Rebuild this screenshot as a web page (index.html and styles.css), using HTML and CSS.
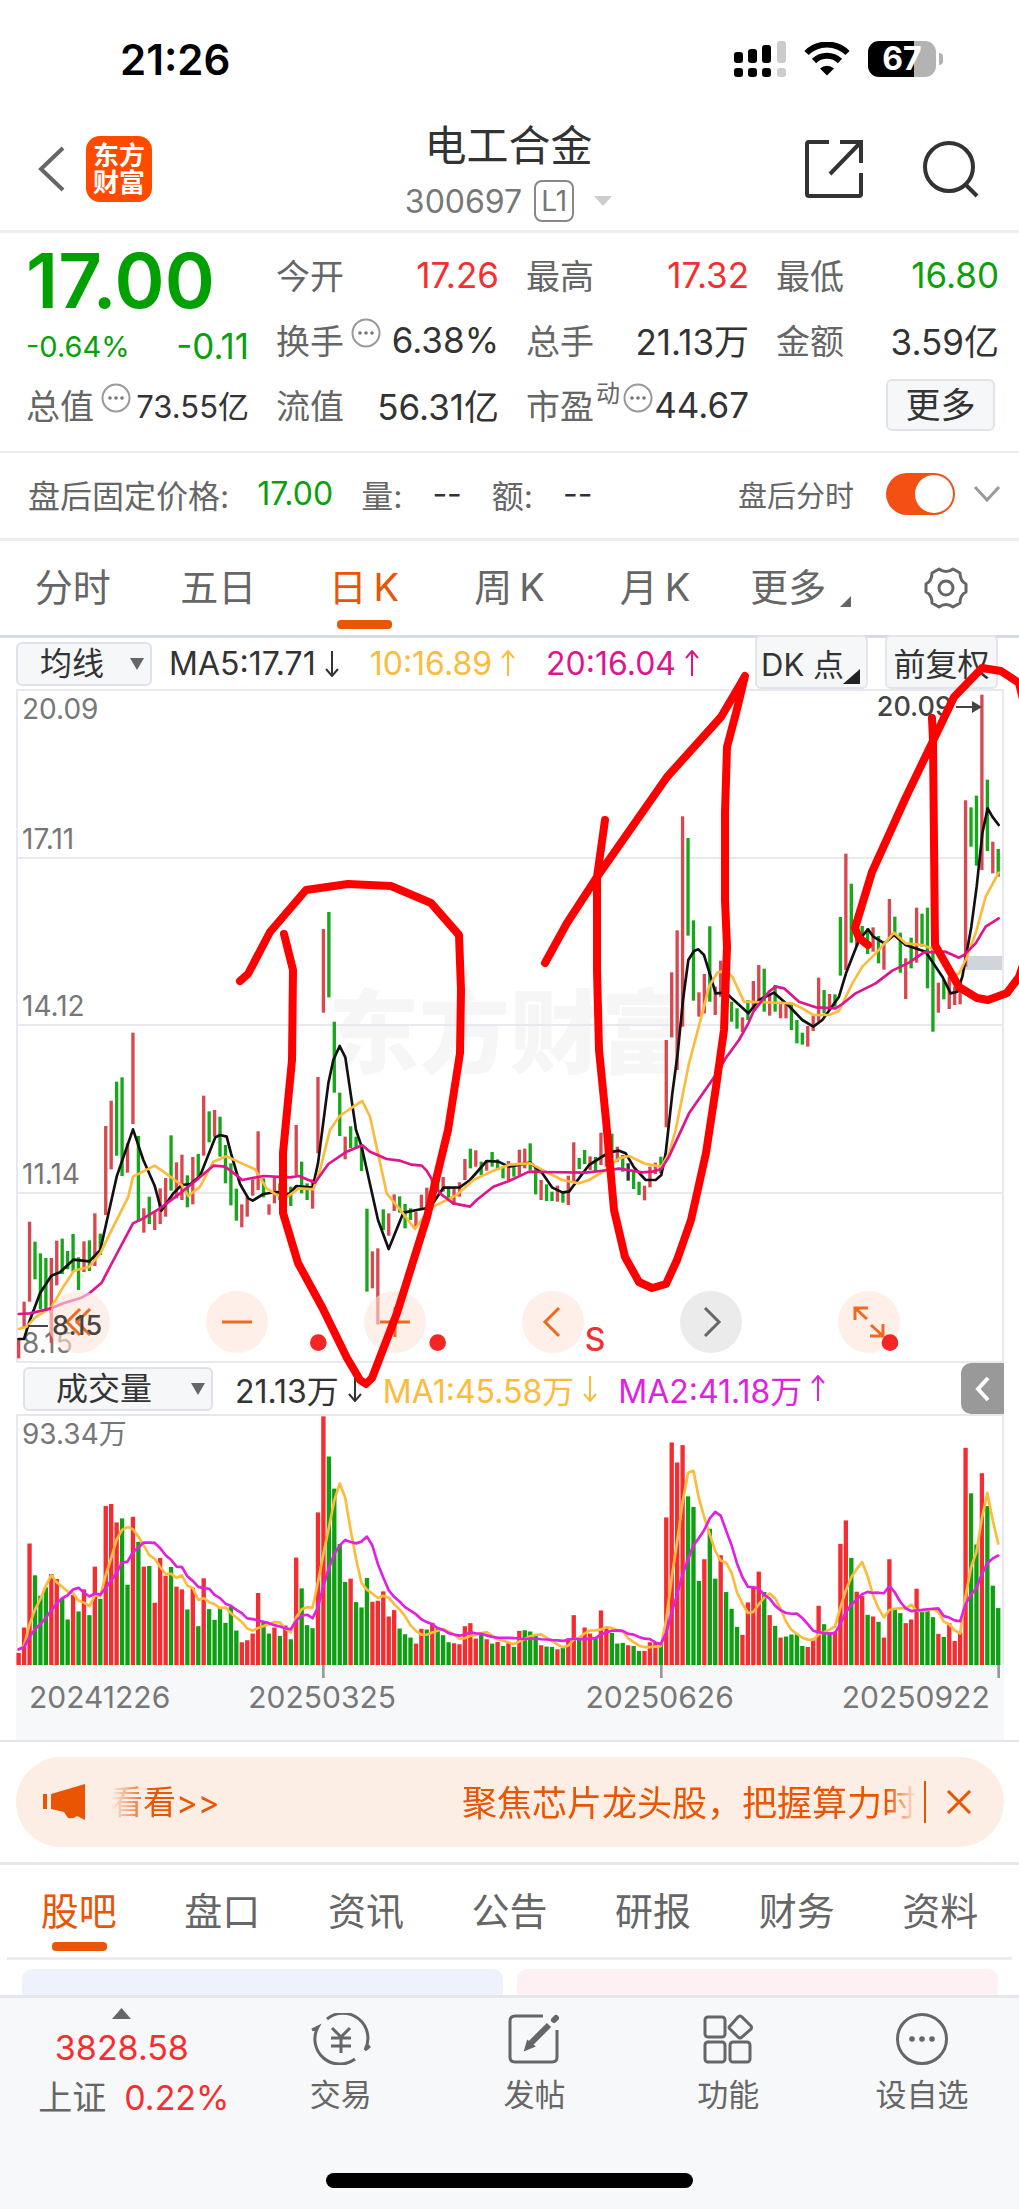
FILE: index.html
```html
<!DOCTYPE html>
<html lang="zh-CN">
<head>
<meta charset="utf-8">
<meta name="viewport" content="width=device-width, initial-scale=1">
<title>电工合金 300697</title>
<link rel="stylesheet" href="styles.css">
</head>
<body>
<div class="status">
  <span class="clock">21:26</span>
  <span class="status-icons">
    <svg width="52" height="36" viewBox="0 0 52 36"><g fill="#000"><rect x="0" y="11" width="9" height="11" rx="3"/><rect x="14" y="8" width="9" height="14" rx="3"/><rect x="28" y="4" width="9" height="18" rx="3"/><rect x="0" y="27" width="9" height="9" rx="3"/><rect x="14" y="27" width="9" height="9" rx="3"/><rect x="28" y="27" width="9" height="9" rx="3"/></g><g fill="#ccc"><rect x="43" y="0" width="9" height="22" rx="3"/><rect x="43" y="27" width="9" height="9" rx="3"/></g></svg>
    <svg width="46" height="34" viewBox="0 0 46 34"><path d="M2.500 11A29 29 0 0 1 43.500 11M10 19A18.500 18.500 0 0 1 36 19" fill="none" stroke="#000" stroke-width="6"/><path d="M16 26.500A10 10 0 0 1 30 26.500L23 33.500Z"/></svg>
    <span class="battery"><span class="cell">67</span><span class="cap"></span></span>
  </span>
</div>

<header class="topbar">
  <div class="top-left">
    <button class="icon-btn" aria-label="返回"><svg width="28" height="46" viewBox="0 0 28 46"><path d="M25 2L3 23L25 44" fill="none" stroke="#666" stroke-width="4"/></svg></button>
    <a class="logo" href="#">东方<br>财富</a>
  </div>
  <div class="title">
    <h1>电工合金</h1>
    <div class="code">300697<span class="level">L1</span><svg width="18" height="10" viewBox="0 0 18 10"><path d="M0 0H18L9 10Z" fill="#ccc"/></svg></div>
  </div>
  <div class="top-right">
    <button class="icon-btn" aria-label="分享"><svg width="58" height="58" viewBox="0 0 58 58" fill="none" stroke="#333" stroke-width="4"><path d="M24 2H4Q2 2 2 4V54Q2 56 4 56H54Q56 56 56 54V33M35 2H56V23M56 2L25 34"/></svg></button>
    <button class="icon-btn" aria-label="搜索"><svg width="56" height="58" viewBox="0 0 56 58" fill="none" stroke="#333" stroke-width="4"><circle cx="26" cy="27" r="24"/><path d="M42 44L54 56"/></svg></button>
  </div>
</header>

<section class="quote">
  <div class="col">
    <div class="price">17.00</div>
    <div class="cell-row change green"><span>-0.64%</span><span class="diff">-0.11</span></div>
    <div class="cell-row small"><span class="label">总值<svg class="tip" viewBox="0 0 30 30"><use href="#dots"/></svg></span><span>73.55亿</span></div>
  </div>
  <div class="col">
    <div class="cell-row"><span class="label">今开</span><span class="red">17.26</span></div>
    <div class="cell-row"><span class="label">换手<svg class="tip" viewBox="0 0 30 30"><use href="#dots"/></svg></span><span>6.38%</span></div>
    <div class="cell-row"><span class="label">流值</span><span>56.31亿</span></div>
  </div>
  <div class="col">
    <div class="cell-row"><span class="label">最高</span><span class="red">17.32</span></div>
    <div class="cell-row"><span class="label">总手</span><span>21.13万</span></div>
    <div class="cell-row"><span class="label">市盈<sup>动</sup><svg class="tip near" viewBox="0 0 30 30"><use href="#dots"/></svg></span><span>44.67</span></div>
  </div>
  <div class="col">
    <div class="cell-row"><span class="label">最低</span><span class="green">16.80</span></div>
    <div class="cell-row"><span class="label">金额</span><span>3.59亿</span></div>
    <div class="cell-row end"><button class="more">更多</button></div>
  </div>
  <svg class="defs" aria-hidden="true"><defs><g id="dots"><circle cx="15" cy="15" r="13.500" fill="none" stroke="#999" stroke-width="2"/><g fill="#777"><circle cx="9" cy="15" r="1.800"/><circle cx="15" cy="15" r="1.800"/><circle cx="21" cy="15" r="1.800"/></g></g></defs></svg>
</section>

<section class="after">
  <span>盘后固定价格:</span><span class="green fixed">17.00</span>
  <span class="vol-l">量:</span><b>--</b><span class="amt-l">额:</span><b>--</b>
  <label class="after-toggle"><span>盘后分时</span><input type="checkbox" class="switch" checked></label>
  <button class="icon-btn" aria-label="展开"><svg width="28" height="16" viewBox="0 0 28 16"><path d="M2 1L14 14L26 1" fill="none" stroke="#999" stroke-width="3"/></svg></button>
</section>

<nav class="tabs period">
  <a href="#">分时</a><a href="#">五日</a><a href="#" class="on">日&#8201;K</a><a href="#">周&#8201;K</a><a href="#">月&#8201;K</a>
  <a href="#" class="drop">更多<svg width="11" height="11" viewBox="0 0 11 11"><path d="M11 0V11H0Z" fill="#666"/></svg></a>
  <button class="icon-btn" aria-label="设置"><svg width="44" height="42" viewBox="0 0 44 42" fill="none" stroke="#666" stroke-width="3" stroke-linejoin="round"><path d="M15 2Q22 7 29 2L36 6Q36 14 42 17V25Q36 28 36 36L29 40Q22 35 15 40L8 36Q8 28 2 25V17Q8 14 8 6Z"/><circle cx="22" cy="21" r="7"/></svg></button>
</nav>

<main class="chart">
  <div class="legend">
    <span class="pick"><select aria-label="指标"><option>均线</option></select></span>
    <span class="ma">MA5:17.71<svg class="arrow down"><use href="#arrow"/></svg></span>
    <span class="ma amber">10:16.89<svg class="arrow"><use href="#arrow"/></svg></span>
    <span class="ma pink">20:16.04<svg class="arrow"><use href="#arrow"/></svg></span>
    <span class="modes">
      <button class="mode dk">DK 点<svg width="17" height="15" viewBox="0 0 17 15"><path d="M17 0V15H0Z" fill="#222"/></svg></button>
      <button class="mode">前复权</button>
    </span>
    <svg class="defs" aria-hidden="true"><defs><g id="arrow"><path d="M7 1V26M1 8L7 1L13 8" fill="none" stroke="currentColor" stroke-width="2"/></g></defs></svg>
  </div>

  <div class="plot price-plot">
    <div class="watermark">东方财富</div>
    <div class="scale"><div><span>20.09</span><span>17.11</span></div><div><span>14.12</span></div><div><span>11.14</span></div><div><span>8.15</span></div></div>
    <div class="gap-mark"></div>
    <svg class="series" id="price" viewBox="48 -990 2964 2016" preserveAspectRatio="none"></svg>
    <div class="tools">
      <button aria-label="最左"><svg viewBox="0 0 62 62"><path d="M42 18L29 31L42 44M32 18L19 31L32 44"/></svg></button>
      <button aria-label="缩小"><svg viewBox="0 0 62 62"><path d="M16 31H46"/></svg></button>
      <button aria-label="放大"><svg viewBox="0 0 62 62"><path d="M16 31H46M31 16V46"/></svg></button>
      <button aria-label="左移"><svg viewBox="0 0 62 62"><path d="M37 17L23 31L37 45"/></svg></button>
      <button aria-label="右移" class="off"><svg viewBox="0 0 62 62"><path d="M25 17L39 31L25 45"/></svg></button>
      <button aria-label="全屏"><svg viewBox="0 0 62 62"><path d="M29 28L17 17M17 29V17H30M33 34L45 45M45 33V45H32"/></svg></button>
    </div>
    <div class="mark low"><svg width="20" height="12" viewBox="0 0 20 12"><path d="M0 6H20" stroke="#444" stroke-width="2"/></svg>8.15</div>
    <div class="mark high">20.09<svg width="26" height="14" viewBox="0 0 26 14"><path d="M0 7H22" stroke="#444" stroke-width="2"/><path d="M16 1L26 7L16 13Z" fill="#444"/></svg></div>
    <svg class="series signals" viewBox="48 -990 2964 2016" preserveAspectRatio="none"><g fill="#f52525"><circle cx="955" cy="968" r="25"/><circle cx="1313" cy="968" r="25"/><circle cx="2670" cy="968" r="25"/></g></svg>
    <span class="sell">S</span>
  </div>

  <div class="legend volume-legend">
    <span class="pick wide"><select aria-label="副图"><option>成交量</option></select></span>
    <span class="ma">21.13万<svg class="arrow down"><use href="#arrow"/></svg></span>
    <span class="ma amber">MA1:45.58万<svg class="arrow down"><use href="#arrow"/></svg></span>
    <span class="ma violet">MA2:41.18万<svg class="arrow"><use href="#arrow"/></svg></span>
    <button class="side" aria-label="展开侧栏"><svg width="16" height="26" viewBox="0 0 16 26"><path d="M13 2L3 13L13 24" fill="none" stroke="#fff" stroke-width="4"/></svg></button>
  </div>

  <div class="plot volume-plot">
    <svg class="series" id="volume" viewBox="48 165 2964 747" preserveAspectRatio="none"></svg>
    <span class="vmax">93.34万</span>
  </div>
  <div class="axis">
    <svg class="ticks" viewBox="48 0 2964 14" preserveAspectRatio="none"><path d="M970 0V14M1984 0V14M2996 0V14" stroke="#999" stroke-width="8"/></svg>
    <div class="dates"><span>20241226</span><span>20250325</span><span>20250626</span><span>20250922</span></div>
  </div>

  <svg class="pen" viewBox="0 638 1019 1102" preserveAspectRatio="none">
    <path d="M240 981L248 974L270 932L306 890L348 884L391 886L431 903L459 935L461 990L460 1053L448 1130L427 1217L397 1313L372 1378L366 1384L360 1380L347 1358L322 1307L298 1263L283 1213L283 1153L292 1060L293 970L284 934"/>
    <path d="M545 963L567 923L597 877L667 777L721 717L741 683L745 676L736 713L727 747L725 813L725 900L727 947L724 1030L716 1087L706 1153L691 1220L677 1260L666 1284L652 1288L639 1282L625 1257L614 1210L606 1120L599 1050L597 970L597 877L605 820"/>
    <path d="M868 945L859 938L855 928L872 872L906 797L932 743L954 697L982 668L1001 671L1019 683L1038 760L1038 920L1019 977L1007 993L988 1000L977 998L959 987L935 945L933 740L932 718"/>
  </svg>
</main>

<section class="banner-wrap">
  <div class="banner">
    <svg width="44" height="36" viewBox="0 0 44 36" fill="#ea5504"><path d="M1 10H5V25H1ZM9 10L43 0V36L35 32Q32 35 26 34L22 28L9 25Z"/></svg>
    <div class="ticker"><a href="#">看看&gt;&gt;</a><a href="#">聚焦芯片龙头股，把握算力时</a></div>
    <button class="icon-btn close" aria-label="关闭"><svg width="26" height="24" viewBox="0 0 26 24"><path d="M2 1L24 23M24 1L2 23" stroke="#ea5504" stroke-width="3"/></svg></button>
  </div>
</section>

<nav class="tabs info">
  <a href="#" class="on">股吧</a><a href="#">盘口</a><a href="#">资讯</a><a href="#">公告</a><a href="#">研报</a><a href="#">财务</a><a href="#">资料</a>
</nav>
<div class="cards"><div class="card blue"></div><div class="card rose"></div></div>

<footer class="dock">
  <div class="dock-row">
    <a href="#" class="index"><svg width="19" height="11" viewBox="0 0 19 11"><path d="M9.500 0L19 11H0Z" fill="#666"/></svg><span class="red">3828.58</span><span class="pair"><span>上证</span><span class="red">0.22%</span></span></a>
    <a href="#"><svg width="60" height="52" viewBox="0 0 60 52"><path d="M16 6A25 25 0 0 1 54 37L59 33M44 46A25 25 0 0 1 7 14L1 17"/><path d="M21 15L30 24L39 15M20 25H40M20 33H40M30 24V40"/></svg>交易</a>
    <a href="#"><svg width="60" height="52" viewBox="0 0 60 52"><path d="M39 3H11Q6 3 6 8V44Q6 49 11 49H48Q53 49 53 44V17"/><path d="M45 12L24 33" stroke-width="6"/><path d="M50 7L52 5" stroke-width="6" stroke-linecap="round"/><path d="M22 36L24 29L29 33Z"/></svg>发帖</a>
    <a href="#"><svg width="60" height="52" viewBox="0 0 60 52"><rect x="7" y="4" width="20" height="20" rx="3"/><rect x="7" y="29" width="20" height="20" rx="3"/><rect x="32" y="29" width="20" height="20" rx="3"/><path d="M40 4Q42 2 44 4L53 13Q54 14 53 16L44 24Q42 26 40 24L32 16Q30 14 32 13Z"/></svg>功能</a>
    <a href="#"><svg width="60" height="52" viewBox="0 0 60 52"><circle cx="30" cy="26" r="24.500"/><g fill="#666" stroke="none"><circle cx="20" cy="26" r="2.800"/><circle cx="30" cy="26" r="2.800"/><circle cx="40" cy="26" r="2.800"/></g></svg>设自选</a>
  </div>
  <div class="home"></div>
</footer>
<script src="chart.js"></script>
</body>
</html>
```

FILE: styles.css
```css
* { box-sizing: border-box; }
body { margin: 0; background: #fff; color: #333; font-family: Inter, "Noto Sans CJK SC", sans-serif; font-size: 35px; overflow-x: hidden; }
button, select { font: inherit; color: inherit; border: 0; background: none; padding: 0; margin: 0; }
a { color: inherit; text-decoration: none; }
svg { display: block; flex: none; }
.defs { position: absolute; width: 0; height: 0; }
.red { color: #f52f2f; }
.green { color: #0aa00a; }
.amber { color: #fdbb3c; }
.pink { color: #e0148c; }
.violet { color: #e022e0; }
.icon-btn { display: flex; align-items: center; justify-content: center; }

.status { display: flex; justify-content: space-between; align-items: center; height: 118px; padding: 0 76px 0 120px; }
.clock { font-size: 42px; font-weight: 600; color: #000; }
.status-icons { display: flex; align-items: center; gap: 18px; }
.battery { display: flex; align-items: center; gap: 3px; }
.cell { width: 68px; height: 36px; border-radius: 11px; background: linear-gradient(90deg, #000 68%, #b3b3b3 68%); color: #fff; font-size: 32px; font-weight: 700; line-height: 36px; text-align: center; }
.cap { width: 4px; height: 12px; border-radius: 0 4px 4px 0; background: #b3b3b3; }

.topbar { display: grid; grid-template-columns: 1fr auto 1fr; align-items: center; height: 115px; padding: 0 40px 0 38px; border-bottom: 3px solid #ededed; }
.top-left { display: flex; align-items: center; gap: 20px; padding-bottom: 10px; }
.logo { width: 66px; height: 66px; padding-top: 6px; border-radius: 14px; background: #ff4a00; color: #fff; font-size: 26px; font-weight: 700; line-height: 27px; text-align: center; }
.title { text-align: center; }
h1 { margin: 0; font-size: 42px; font-weight: 400; line-height: 54px; }
.code { display: flex; align-items: center; justify-content: center; gap: 12px; height: 56px; font-size: 32px; color: #777; }
.code svg { margin-left: 8px; }
.level { border: 2px solid #888; border-radius: 8px; padding: 0 5px; font-size: 28px; line-height: 38px; }
.top-right { display: flex; justify-content: flex-end; gap: 60px; padding-bottom: 10px; }

.quote { display: grid; grid-template-columns: repeat(4, 1fr); gap: 27px; padding: 9px 20px 14px 26px; border-bottom: 2px solid #ededed; }
.col { display: flex; flex-direction: column; }
.cell-row { display: flex; align-items: center; justify-content: space-between; height: 65px; white-space: nowrap; }
.cell-row.end { justify-content: flex-end; }
.price { height: 65px; font-size: 76px; font-weight: 600; line-height: 76px; color: #00a000; }
.change { padding-top: 13px; font-size: 29px; }
.diff { font-size: 35px; }
.small { font-size: 31px; }
.label { display: flex; align-items: center; font-size: 34px; color: #666; }
.label sup { align-self: flex-start; margin: -6px 0 0 2px; font-size: 24px; line-height: 40px; }
.tip { width: 30px; height: 30px; margin: -14px 0 0 7px; }
.tip.near { margin-left: 3px; }
.more { width: 109px; height: 52px; margin-right: 4px; border: 2px solid #e0e3e8; border-radius: 6px; background: #f6f7f9; line-height: 46px; }

.after { display: flex; align-items: center; height: 88px; padding: 0 18px 4px 28px; border-bottom: 3px solid #ededed; font-size: 32px; color: #666; white-space: nowrap; }
.after b { font-weight: 400; color: #333; }
.fixed { margin: 0 28px; }
.vol-l, .amt-l { margin-right: 30px; }
.amt-l { margin-left: 30px; }
.after-toggle { display: flex; align-items: center; gap: 32px; margin: 0 18px 0 auto; font-size: 29px; }
.switch { appearance: none; width: 69px; height: 42px; margin: 0; padding: 2px; border-radius: 21px; background: #f55014; }
.switch::before { content: ""; display: block; width: 38px; height: 38px; border-radius: 50%; background: #fff; }
.switch:checked::before { margin-left: auto; }

.tabs { display: grid; grid-template-columns: repeat(7, 1fr); justify-items: center; font-size: 38px; color: #666; }
.tabs a { display: flex; align-items: center; position: relative; padding-bottom: 8px; white-space: nowrap; }
.tabs .on { color: #ea5504; }
.tabs .on::after { content: ""; position: absolute; left: 50%; bottom: 6px; width: 55px; height: 9px; margin-left: -27px; border-radius: 4px; background: #ea5504; }
.period { height: 97px; border-bottom: 3px solid #d9dbe3; }
.drop svg { align-self: flex-end; margin: 0 0 20px 14px; }

.chart { position: relative; }
.legend { display: flex; align-items: center; height: 51px; padding: 0 21px 0 16px; font-size: 32px; white-space: nowrap; }
.pick { position: relative; }
.pick::after { content: ""; position: absolute; right: 8px; top: 16px; border: 7px solid transparent; border-top: 12px solid #666; border-bottom: 0; }
.pick select { display: block; appearance: none; width: 136px; height: 44px; padding: 0 0 0 22px; border: 2px solid #dfe2e8; border-radius: 6px; background: #f6f7f9; font-size: 32px; line-height: 40px; }
.pick.wide select { width: 190px; padding-left: 31px; }
.ma { display: flex; align-items: center; gap: 9px; margin-left: 17px; }
.ma + .ma { margin-left: 31px; }
.arrow { width: 14px; height: 27px; }
.down { transform: rotate(180deg); }
.modes { display: flex; gap: 17px; margin: -3px 0 0 auto; align-self: stretch; }
.mode { width: 113px; border: 2px solid #e3e5ea; border-radius: 6px; background: #f6f7f9; font-size: 32px; }
.dk { position: relative; padding-right: 18px; font-size: 31px; }
.dk svg { position: absolute; right: 6px; bottom: 3px; }

.plot { position: relative; margin: 0 15px 0 16px; border: 2px solid #e8e9f0; }
.price-plot { height: 674px; }
.series { position: absolute; left: -2px; top: -1px; width: calc(100% + 4px); height: calc(100% + 2px); }
.signals { pointer-events: none; }
.watermark { position: absolute; inset: 0; display: flex; align-items: center; justify-content: center; font-size: 91px; font-weight: 900; color: #f6f6f7; }
.scale { position: absolute; inset: 0; display: grid; grid-template-rows: repeat(4, 1fr); font-size: 28px; line-height: 36px; color: #777; }
.scale div { display: flex; flex-direction: column; justify-content: flex-end; padding-left: 4px; border-bottom: 2px solid #e8e9f0; }
.scale div:first-child { justify-content: space-between; }
.scale div:last-child { border: 0; }
.gap-mark { position: absolute; right: 0; top: 265px; width: 38px; height: 14px; background: #d0d4db; }
.mark { position: absolute; display: flex; align-items: center; gap: 4px; font-size: 27px; font-weight: 500; line-height: 30px; color: #444; }
.low { left: 10px; bottom: 20px; }
.high { right: 20px; top: 1px; }
.tools { position: absolute; left: 30px; right: 102px; bottom: 8px; display: flex; justify-content: space-between; }
.tools button { width: 62px; height: 62px; border-radius: 50%; background: rgba(253, 229, 216, 0.6); }
.tools .off { background: #ebebeb; }
.tools svg { fill: none; stroke: #ee6a22; stroke-width: 3; }
.tools .off svg { stroke: #666; }
.sell { position: absolute; left: calc(58% - 4px); bottom: 3px; font-size: 32px; font-weight: 500; line-height: 36px; color: #f03232; }

.volume-legend { height: 51px; padding: 0 15px 0 23px; }
.volume-legend .ma { margin-left: 22px; }
.volume-legend .ma + .ma { margin-left: 21px; }
.side { align-self: stretch; display: flex; align-items: center; justify-content: center; width: 43px; margin-left: auto; border-radius: 10px 0 0 10px; background: #999; }
.volume-plot { height: 250px; border-bottom: 0; }
.vmax { position: absolute; left: 4px; top: 0; font-size: 28px; line-height: 36px; color: #777; }
.axis { height: 76px; margin: 0 15px 0 16px; background: #f7f8fa; font-size: 30px; color: #777; }
.ticks { width: 100%; height: 14px; }
.dates { display: grid; grid-template-columns: 219fr 337fr 256fr 162fr; padding: 0 0 0 13px; line-height: 38px; }
.pen { position: absolute; inset: 0; width: 100%; height: 100%; fill: none; stroke: #f00; stroke-width: 8; stroke-linejoin: round; stroke-linecap: round; pointer-events: none; }

.banner-wrap { padding: 15px 15px 15px 16px; border-top: 2px solid #e6e6e8; border-bottom: 3px solid #e8e8ea; }
.banner { display: flex; align-items: center; height: 90px; padding: 0 32px 0 26px; border-radius: 45px; background: #fdeee5; color: #ea5504; font-size: 35px; }
.ticker { flex: 1; display: flex; justify-content: space-between; align-items: center; overflow: hidden; margin: 0 7px 0 24px; padding-bottom: 4px; white-space: nowrap; mask-image: linear-gradient(90deg, transparent, #000 40px, #000 calc(100% - 30px), transparent); }
.ticker a:first-child { font-size: 33px; }
.close { height: 42px; padding-left: 20px; border-left: 2px solid #ea5504; }

.info { height: 95px; margin: 0 7px; border-bottom: 3px solid #ededed; }
.info a { padding-bottom: 6px; }
.cards { display: grid; grid-template-columns: 1fr 1fr; gap: 14px; height: 35px; padding: 9px 21px 0 22px; }
.card { border-radius: 10px 10px 0 0; }
.blue { background: #edf2fd; }
.rose { background: #fdf1f3; }

.dock { border-top: 3px solid #e6e7ec; background: #f7f8fa; padding: 0 0 21px; color: #666; }
.dock-row { display: grid; grid-template-columns: 244fr repeat(4, 194fr); height: 175px; }
.dock-row a { display: flex; flex-direction: column; align-items: center; gap: 7px; padding-top: 15px; font-size: 31px; line-height: 46px; }
.dock-row > a > svg { fill: none; stroke: #666; stroke-width: 3; }
.dock-row .index { gap: 7px; padding-top: 10px; font-size: 34px; line-height: 43px; }
.dock-row .index > svg { stroke: none; }
.pair { display: flex; gap: 18px; padding-left: 24px; }
.home { width: 36%; height: 15px; margin: 0 auto; border-radius: 8px; background: #000; }
```

FILE: chart.js
```js
const NS = 'http://www.w3.org/2000/svg';
const STEP = 16.326;
const LEFT = 56;
const x = i => LEFT + i * STEP;

// One entry per session: direction (r = up, g = down), then the top of its bar.
const volume = `r876 r800 r549 g644 g705 g680 r640 r655 g712 g776 r703 g752 r686 g763 r618 g714 r437 r431 r486 g474
g672 r469 g544 r618 g616 r726 r592 r645 g619 r678 r686 g746 r681 g796 r653 g745 g777 g740 g786 g738
g809 r844 r838 r818 r697 g782 g818 r800 g825 r794 g835 r591 g683 g793 g802 r456 r169 g289 g385 g550
g664 r654 g724 g740 g652 r723 r720 r692 r767 r748 g803 g820 g830 r848 r804 g806 r786 g803 g823 g844
r847 r850 r796 r787 r833 g817 r835 g848 r843 g855 r843 g858 r810 g808 g812 g820 r853 g857 g858 r865
g860 r832 r763 g832 r800 r818 g829 r749 r798 g816 g848 g846 r853 g855 g870 r870 r844 r846 g848 r471
r247 r307 r255 g408 g440 g661 r596 g505 g654 r584 g694 g744 g798 r822 r725 r678 r633 g694 r763 g795
r830 g827 g821 g820 g855 r858 r833 r735 g790 g815 r812 r550 r480 g592 r693 r706 g762 r767 g783 r830
r596 g744 g757 r787 r776 r684 g748 g748 g769 r819 g828 r787 r840 r815 r263 g399 g552 r339 g437 g675 g742`
  .split(/\s+/).map(s => ({ dir: s[0], top: +s.slice(1) }));

// direction, high, low
const candles = `r955,1015 r845,925 r605,845 g665,778 g700,868 g714,868 r714,968 r662,796 g656,762 g693,748
g642,755 g712,810 r664,756 g661,753 r580,738 g641,705 r318,585 r242,448 g185,407 g172,468
r370,458 r38,312 g348,605 r565,638 g530,612 r577,630 r505,612 r474,590 g346,512 r427,535
r404,540 g466,562 r411,553 g402,470 r227,407 g274,367 r270,350 g290,410 g375,490 g430,556
g506,602 r553,622 r530,590 r478,527 r334,510 g475,532 r553,584 r470,550 g490,540 r480,545
g500,558 r315,465 g425,520 g490,540 r478,566 r171,400 r-273,-22 g-324,-68 g5,218 g218,348
r350,418 g319,385 g350,385 g372,453 g566,815 r694,805 r685,914 g568,630 r580,647 r523,573
g529,578 g552,625 g565,600 r575,620 r524,570 r503,570 g480,545 g470,515 r471,515 g500,535
r505,555 r487,530 r417,480 g386,445 r391,440 g425,465 r420,452 g396,440 g418,450 g440,475
r423,480 g430,470 r389,465 r386,445 g370,450 g440,523 r480,540 g493,543 g515,543 r497,545
g515,548 r467,555 r367,485 g414,447 g390,432 r409,450 g411,455 r338,435 r370,440 g341,415
r380,425 g405,455 k430,482 g455,507 g485,525 r497,541 r440,502 r428,462 g410,460 r60,322
r-143,52 r-269,150 r-611,20 g-546,-253 g-299,-58 r-83,-10 r-138,-20 g-281,-55 r-100,-15 r-178,-70
g-90,-20 g-55,5 g-35,26 r-8,36 g-60,0 r-117,-30 r-165,-55 g-154,-25 r-75,-13 g-105,-25
r-55,-5 r-50,-5 g-50,30 g0,70 g38,74 r18,80 r-13,33 r-127,5 g-90,-20 r-78,-30
g-77,-40 g-309,-133 r-499,-150 g-409,-232 r-320,-220 g-282,-230 g-275,-198 r-278,-205 g-252,-170 r-235,-151
r-363,-245 g-310,-255 g-262,-142 r-185,-63 g-247,-155 r-337,-172 g-319,-220 g-337,-95 g-220,35 r-112,-22
g-120,-62 r-130,-33 r-100,-45 r-120,-47 r-659,-160 g-638,-520 g-673,-463 r-976,-450 g-721,-507 r-535,-440 g-513,-430`
  .split(/\s+/).map(s => { const [hi, lo] = s.slice(1).split(',').map(Number); return { dir: s[0], hi, lo }; });

const averages = {
  '#111': `56,957 72,957 88,905 120,820 154,767 180,757 220,719 268,724 301,690 350,470 399,328 430,420 464,497 484,572 520,520 545,495 572,492 600,468 646,352 660,345 680,350 693,400 720,492 745,535 758,542 790,522 830,516 868,522 889,498 938,503 954,430 985,190 1000,120 1019,78 1036,112 1068,330 1085,380 1134,600 1166,687 1210,578 1250,570 1290,563 1330,503 1379,502 1410,480 1460,423 1495,425 1527,440 1591,428 1627,460 1657,503 1687,517 1707,515 1767,435 1827,397 1857,392 1877,400 1902,442 1937,480 1967,480 1984,465 1997,400 2017,220 2033,100 2049,-60 2065,-180 2082,-207 2095,-212 2112,-195 2132,-130 2147,-80 2177,-82 2207,-55 2245,-20 2277,-60 2322,-82 2367,-42 2407,0 2440,20 2467,0 2517,-70 2538,-140 2577,-240 2604,-272 2620,-250 2653,-230 2682,-255 2717,-225 2777,-205 2800,-170 2827,-130 2852,-80 2872,-85 2887,-130 2914,-280 2930,-400 2947,-560 2963,-635 2977,-610 2996,-585`,
  '#fdbb3c': `56,927 80,920 105,893 154,862 190,800 222,752 268,740 301,700 330,640 385,530 399,470 464,437 490,455 545,495 565,528 600,500 640,425 680,409 725,430 765,448 800,505 830,525 862,530 897,505 940,508 960,450 990,330 1019,288 1060,260 1087,243 1110,290 1134,400 1160,520 1205,575 1245,627 1290,565 1330,545 1370,525 1420,480 1480,452 1527,434 1591,430 1637,455 1687,480 1737,490 1767,480 1817,450 1857,415 1887,408 1937,432 1984,440 2007,400 2027,330 2067,130 2107,-20 2127,-100 2152,-142 2177,-148 2197,-130 2232,-55 2377,-50 2407,-35 2440,-15 2487,-15 2517,-27 2557,-110 2587,-160 2627,-200 2682,-262 2717,-230 2767,-225 2800,-212 2830,-180 2855,-130 2877,-140 2897,-180 2927,-260 2957,-370 2996,-442`,
  '#e0148c': `56,882 90,880 154,865 190,850 240,835 268,820 305,788 350,702 399,610 430,595 480,565 540,520 590,480 640,437 675,440 715,470 726,480 790,468 870,472 897,468 945,488 985,432 1040,395 1087,376 1110,395 1160,417 1200,422 1235,434 1265,437 1280,452 1320,520 1360,550 1410,560 1430,540 1480,500 1527,483 1587,455 1627,456 1757,458 1827,450 1857,446 1927,457 1957,455 1984,447 2007,410 2067,280 2147,165 2177,115 2217,60 2245,10 2260,-25 2307,-85 2327,-100 2352,-95 2397,-55 2447,-38 2507,-35 2527,-48 2567,-80 2627,-110 2677,-148 2727,-172 2772,-203 2837,-205 2877,-187 2892,-195 2927,-230 2957,-280 2996,-305`
};

function add(svg, name, attrs) {
  const el = document.createElementNS(NS, name);
  for (const k in attrs) el.setAttribute(k, attrs[k]);
  svg.appendChild(el);
}
function line(svg, points, color) {
  add(svg, 'polyline', { points, fill: 'none', stroke: color, 'stroke-width': 8, 'stroke-linejoin': 'round', 'stroke-linecap': 'round' });
}

const price = document.getElementById('price');
const candleColor = { r: '#d9484f', g: '#16a81a', k: '#333' };
candles.forEach((c, i) => add(price, 'rect', { x: x(i) - 5, y: c.hi, width: 10, height: c.lo - c.hi, fill: candleColor[c.dir] }));
for (const color in averages) line(price, averages[color], color);

const vol = document.getElementById('volume');
const volColor = { r: '#f52c30', g: '#0ea012' };
volume.forEach((v, i) => add(vol, 'rect', { x: x(i) - 6.5, y: v.top, width: 13, height: 912 - v.top, fill: volColor[v.dir] }));

// Moving average of the last n sessions, seeded with a quiet run before the first one.
function average(n) {
  const tops = Array(n).fill(864).concat(volume.map(v => v.top));
  return volume.map((_, i) => {
    const part = tops.slice(i + 1, i + 1 + n);
    return x(i) + ',' + part.reduce((a, b) => a + b, 0) / n;
  }).join(' ');
}
line(vol, average(5), '#fdbb3c');
line(vol, average(10), '#e022e0');
```
